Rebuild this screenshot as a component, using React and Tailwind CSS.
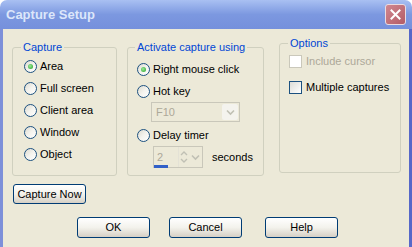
import React from "react";

const font = { fontFamily: '"Liberation Sans", Arial, sans-serif' };

function Radio({ checked }) {
  return (
    <span className="relative flex h-[13px] w-[13px] shrink-0 items-center justify-center rounded-full border border-[#1c5180] bg-gradient-to-br from-[#dcdad0] via-[#f4f3ee] to-white">
      {checked && (
        <span className="h-[5px] w-[5px] rounded-full bg-[radial-gradient(circle_at_40%_40%,#9ce89a,#21a121)]" />
      )}
    </span>
  );
}

function Check({ disabled }) {
  return (
    <span
      className={
        "h-[13px] w-[13px] shrink-0 border " +
        (disabled
          ? "border-[#cac8bb] bg-white"
          : "border-[#1c5180] bg-gradient-to-br from-[#dcdcd7] to-white")
      }
    />
  );
}

function RadioRow({ label, checked, className = "" }) {
  return (
    <div className={"flex h-[22px] items-center gap-[3px] " + className}>
      <Radio checked={checked} />
      <span className="text-[11px] leading-none text-black">{label}</span>
    </div>
  );
}

function Btn({ children, className = "" }) {
  return (
    <div
      className={
        "flex items-center justify-center rounded-[3px] border border-[#003c74] bg-gradient-to-b from-white via-[#f3f2ec] to-[#d6d0c5] text-[11px] text-black " +
        className
      }
    >
      {children}
    </div>
  );
}

function Chevron({ color = "#c0c0b4" }) {
  return (
    <svg width="9" height="7" viewBox="0 0 9 7">
      <path d="M1 1.5 L4.5 5 L8 1.5" fill="none" stroke={color} strokeWidth="1.6" />
    </svg>
  );
}

export default function App() {
  return (
    <div className="flex h-[247px] w-[412px] flex-col overflow-hidden bg-white" style={font}>
      {/* title bar */}
      <div className="flex h-[29px] shrink-0 items-center rounded-t-[7px] bg-gradient-to-b from-[#a9c0f2] via-[#7c98e0] to-[#7590dc] pl-[6px] pr-[6px]">
        <span className="text-[13px] font-bold text-[#dce6fa]">Capture Setup</span>
        <div className="ml-auto flex h-[21px] w-[21px] items-center justify-center rounded-[3px] border border-[#eadbe0] bg-gradient-to-br from-[#d08790] to-[#b35c66]">
          <svg width="11" height="11" viewBox="0 0 11 11">
            <path d="M1.5 1.5 L9.5 9.5 M9.5 1.5 L1.5 9.5" stroke="white" strokeWidth="2" strokeLinecap="square" />
          </svg>
        </div>
      </div>

      {/* body */}
      <div className="flex flex-1 flex-col border-l-[3px] border-r-[3px] border-l-[#7d90d9] border-r-[#5668c8] bg-[#ece9d8]">
        <div className="flex items-start">
          {/* Capture group */}
          <fieldset className="ml-[9px] mt-[12px] box-border h-[135px] w-[105px] rounded-[3px] border border-[#d0d0bf] pl-[11px]">
            <legend className="ml-[-3px] px-[2px] text-[11px] leading-[13px] text-[#0046d5]">Capture</legend>
            <div className="mt-[1px] flex flex-col">
              <RadioRow label="Area" checked />
              <RadioRow label="Full screen" />
              <RadioRow label="Client area" />
              <RadioRow label="Window" />
              <RadioRow label="Object" />
            </div>
          </fieldset>

          {/* Activate group */}
          <fieldset className="ml-[10px] mt-[12px] box-border h-[135px] w-[137px] rounded-[3px] border border-[#d0d0bf] pl-[9px]">
            <legend className="ml-[-2px] px-[2px] text-[11px] leading-[13px] text-[#0046d5]">Activate capture using</legend>
            <div className="mt-[4px] flex flex-col">
              <RadioRow label="Right mouse click" checked />
              <RadioRow label="Hot key" />
              <div className="ml-[14px] flex h-[20px] w-[89px] items-center border border-[#c9c7ba] bg-[#ece9d8]">
                <span className="pl-[4px] text-[11px] text-[#aca899]">F10</span>
                <div className="ml-auto mr-[1px] flex h-[16px] w-[16px] items-center justify-center rounded-[2px] bg-[#f4f3ee]">
                  <Chevron />
                </div>
              </div>
              <RadioRow label="Delay timer" className="mt-[2px]" />
              <div className="flex items-center">
                <div className="relative ml-[16px] flex h-[22px] w-[50px] items-center border border-[#c9c7ba] bg-[#ece9d8]">
                  <span className="pl-[3px] text-[11px] text-[#aca899]">2</span>
                  <div className="ml-auto flex h-full flex-col items-center justify-center border-l border-[#e4e2d6] px-[1px]">
                    <svg width="8" height="14" viewBox="0 0 8 14">
                      <path d="M1 5 L4 2 L7 5 M1 9 L4 12 L7 9" fill="none" stroke="#c0c0b4" strokeWidth="1.4" />
                    </svg>
                  </div>
                  <div className="mr-[1px] flex w-[12px] items-center justify-center">
                    <Chevron />
                  </div>
                  <div className="absolute bottom-[-1px] left-[0px] h-[3px] w-[14px] bg-[#3160c8]" />
                </div>
                <span className="ml-[9px] text-[11px] text-black">seconds</span>
              </div>
            </div>
          </fieldset>

          {/* Options group */}
          <fieldset className="ml-[15px] mt-[8px] box-border h-[136px] w-[122px] rounded-[3px] border border-[#d0d0bf] pl-[9px]">
            <legend className="ml-[-1px] px-[2px] text-[11px] leading-[13px] text-[#0046d5]">Options</legend>
            <div className="mt-[5px] flex h-[13px] items-center gap-[4px]">
              <Check disabled />
              <span className="text-[11px] text-[#aca899]">Include cursor</span>
            </div>
            <div className="mt-[13px] flex h-[13px] items-center gap-[4px]">
              <Check />
              <span className="text-[11px] text-black">Multiple captures</span>
            </div>
          </fieldset>
        </div>

        <Btn className="ml-[10px] mt-[8px] h-[20px] w-[73px]">Capture Now</Btn>

        <div className="ml-[74px] mt-[13px] flex gap-[19px]">
          <Btn className="h-[21px] w-[73px]">OK</Btn>
          <Btn className="h-[21px] w-[73px]">Cancel</Btn>
          <Btn className="ml-[4px] h-[21px] w-[73px]">Help</Btn>
        </div>
      </div>
    </div>
  );
}
